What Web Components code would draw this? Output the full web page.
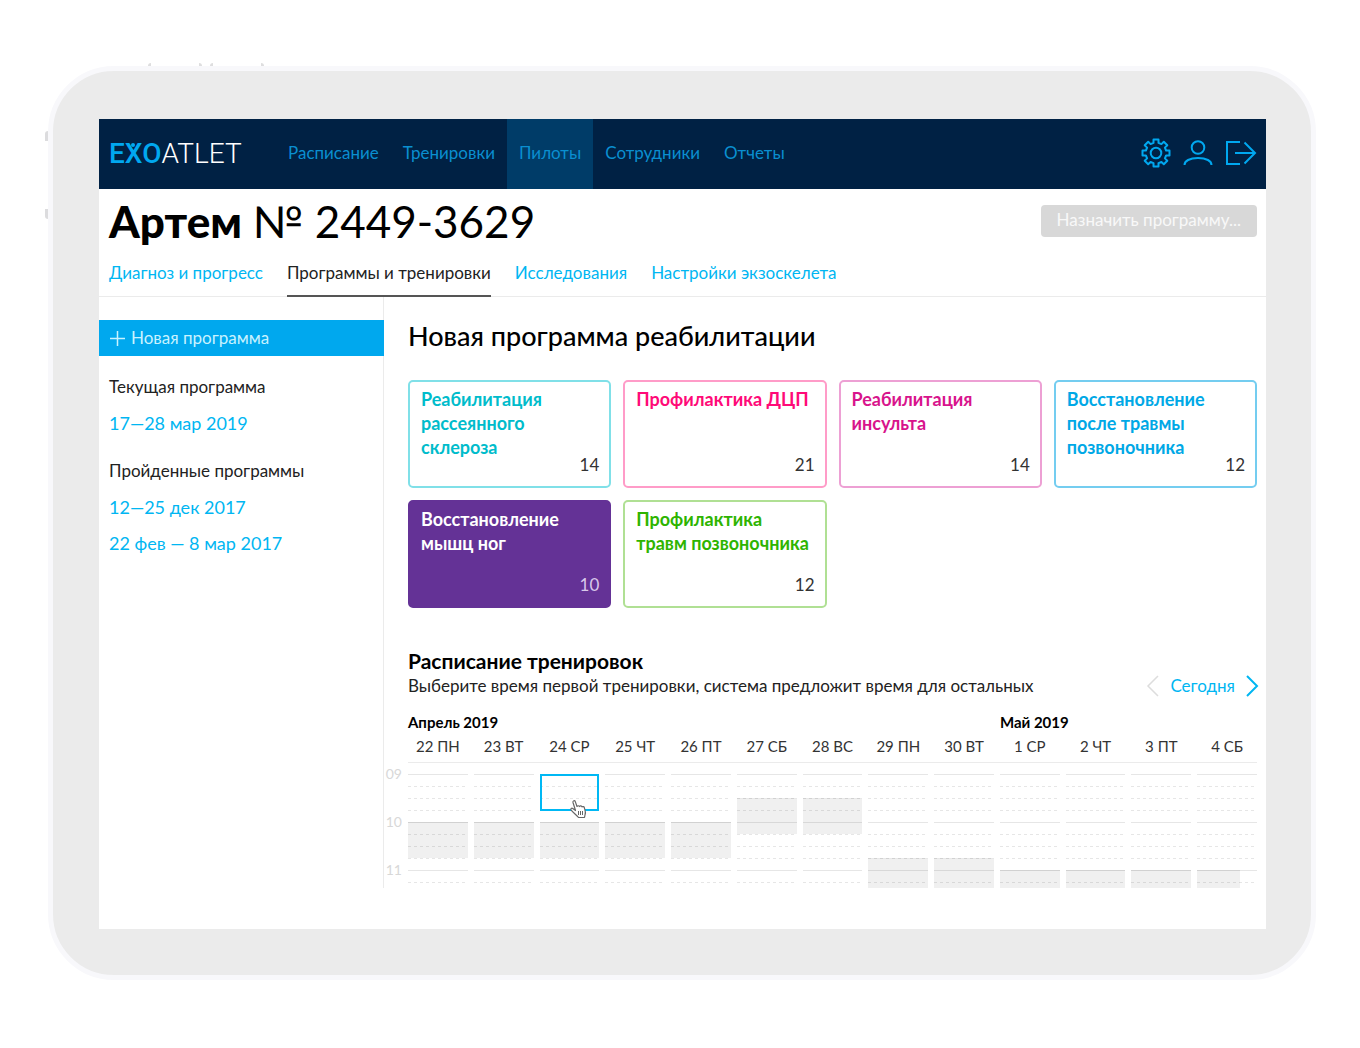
<!DOCTYPE html>
<html lang="ru">
<head>
<meta charset="utf-8">
<title>ExoAtlet</title>
<style>
  body {
    margin: 0;
    background: #fff;
    color: #111;
    font: 17px/24px Lato, "Noto Sans", sans-serif;
    --accent: #00b6f2;
    --line: #ebebeb;
  }
</style>
</head>
<body>
<tablet-frame>
  <app-header>
    <nav-item>Расписание</nav-item>
    <nav-item>Тренировки</nav-item>
    <nav-item active>Пилоты</nav-item>
    <nav-item>Сотрудники</nav-item>
    <nav-item>Отчеты</nav-item>
  </app-header>
  <pilot-title name="Артем" number="№ 2449-3629"></pilot-title>
  <tab-bar>
    <tab-link>Диагноз и прогресс</tab-link>
    <tab-link active>Программы и тренировки</tab-link>
    <tab-link>Исследования</tab-link>
    <tab-link>Настройки экзоскелета</tab-link>
  </tab-bar>
  <pilot-layout>
    <program-sidebar slot="side"></program-sidebar>
    <program-grid heading="Новая программа реабилитации">
      <program-card count="14" style="--tone:#00bccb;--edge:#80e0e8">Реабилитация рассеянного склероза</program-card>
      <program-card count="21" style="--tone:#ff0a78;--edge:#ff9cc8">Профилактика ДЦП</program-card>
      <program-card count="14" style="--tone:#d8148c;--edge:#eda0d4">Реабилитация инсульта</program-card>
      <program-card count="12" style="--tone:#00a8e6;--edge:#74cdf0">Восстановление после травмы позвоночника</program-card>
      <program-card count="10" selected style="--tone:#fff;--edge:#643296">Восстановление мышц ног</program-card>
      <program-card count="12" style="--tone:#2eb400;--edge:#b0e094">Профилактика травм позвоночника</program-card>
    </program-grid>
    <training-schedule></training-schedule>
  </pilot-layout>
</tablet-frame>

<script>
const define = (name, markup) => {
  customElements.define(name, class extends HTMLElement {
    connectedCallback() {
      if (this.shadowRoot) return;
      const root = this.attachShadow({ mode: 'open' });
      root.innerHTML = typeof markup === 'function' ? markup(this) : markup;
    }
  });
};

define('tablet-frame', `
<style>
  :host { display: block; position: relative; margin: 66px 44px 66px 48px; padding: 48px 45px 46px 46px;
    border: 5px solid #f8f8fb; border-radius: 66px; background: #ebebeb; }
  .screen { background: #fff; padding-bottom: 41px; }
  .key { position: absolute; }
  .top { top: -8px; height: 3px; width: 48px; border: solid #dededf; border-width: 0 3px; border-radius: 4px 4px 0 0; }
  .left { left: -8px; width: 3px; height: 10px; background: #dcdcde; }
  .up { border-radius: 3px 0 0 0; }
  .down { border-radius: 0 0 0 3px; }
</style>
<i class="key top" style="left:95px"></i><i class="key top" style="left:157px"></i>
<i class="key left up" style="top:60px"></i><i class="key left down" style="top:138px"></i>
<div class="screen"><slot></slot></div>`);

define('app-header', `
<style>
  :host { display: flex; align-items: stretch; height: 70px; background: #002144; padding: 0 9px 0 10px; }
  .logo { flex: 0 0 167px; display: flex; align-items: center; color: #fff; text-decoration: none;
    font: 300 28px/34px Roboto, sans-serif; }
  .logo b { position: relative; font-weight: 500; color: #00a8f0; }
  .logo i { position: absolute; left: 50%; top: 6px; width: 4px; height: 4px; margin-left: -4px; border-radius: 50%; background: #00a8f0; }
  nav { display: flex; flex: 1; }
  .tools { display: flex; align-items: center; gap: 12px; padding-bottom: 3px; }
  button { border: 0; padding: 0; background: none; display: flex; }
  svg { display: block; fill: none; stroke: #00a8f0; stroke-width: 2; }
</style>
<a class="logo" href="#"><b>EXO<i></i></b><span>ATLET</span></a>
<nav><slot></slot></nav>
<div class="tools">
  <button aria-label="Настройки"><svg width="30" height="30" viewBox="0 0 30 30">
    <path stroke-linejoin="round" d="M12.500 1.500h5v3.400l2.900 1.200 2.400-2.400 3.500 3.500-2.400 2.400 1.200 2.900h3.400v5h-3.400l-1.200 2.900 2.400 2.400-3.500 3.500-2.400-2.400-2.900 1.200v3.400h-5v-3.400l-2.900-1.200-2.400 2.400-3.500-3.500 2.400-2.400-1.200-2.900H1.500v-5h3.400l1.200-2.900-2.400-2.400 3.500-3.500 2.400 2.400 2.900-1.200z"/><circle cx="15" cy="15" r="5.300"/></svg></button>
  <button aria-label="Профиль"><svg width="30" height="30" viewBox="0 0 30 30">
    <circle cx="15" cy="9.500" r="6.300"/><path d="M1.500 27c0-4 5-7 13.500-7s13.500 3 13.500 7"/></svg></button>
  <button aria-label="Выход"><svg width="32" height="30" viewBox="0 0 32 30">
    <path d="M15 4H2v22h13M10 15h20M19.500 4.500 30 15 19.500 25.500"/></svg></button>
</div>`);

define('nav-item', `
<style>
  :host { display: flex; }
  a { display: flex; align-items: center; padding: 0 12px 2px; color: #0a8fd0; text-decoration: none; white-space: nowrap; font-size: 17px; }
  :host([active]) a { background: #003c68; }
</style>
<a href="#"><slot></slot></a>`);

define('pilot-title', el => `
<style>
  :host { display: flex; justify-content: space-between; align-items: center; height: 64px; padding: 0 9px 0 10px; }
  h1 { margin: 0; font-size: 44px; line-height: 64px; font-weight: 900; white-space: nowrap; color: #000; }
  h1 span { font-weight: 400; }
  button { height: 32px; margin: 0; padding: 0 16px 2px; border: 0; border-radius: 4px; background: #d8d8d8; color: #f8f8f8;
    font: inherit; white-space: nowrap; }
</style>
<h1>${el.getAttribute('name')} <span>${el.getAttribute('number')}</span></h1>
<button disabled>Назначить программу...</button>`);

define('tab-bar', `
<style>
  :host { display: flex; gap: 24px; height: 43px; padding: 0 10px; border-bottom: 1px solid var(--line); }
</style><slot></slot>`);

define('tab-link', `
<style>
  :host { display: block; height: 44px; }
  a { display: block; box-sizing: border-box; height: 44px; padding-top: 8px; color: var(--accent);
    text-decoration: none; white-space: nowrap; font-size: 17px; }
  :host([active]) a { color: #222; border-bottom: 2px solid #555; }
</style>
<a href="#"><slot></slot></a>`);

define('pilot-layout', `
<style>
  :host { display: flex; align-items: stretch; }
  aside { flex: 0 0 284px; padding-top: 23px; border-right: 1px solid var(--line); }
  main { flex: 1; min-width: 0; padding: 23px 9px 0 24px; }
</style>
<aside><slot name="side"></slot></aside>
<main><slot></slot></main>`);

define('program-sidebar', `
<style>
  :host { display: block; font-size: 17px; line-height: 36px; }
  button { display: flex; align-items: center; gap: 6px; width: calc(100% + 1px); height: 36px; margin: 0 0 13px; padding: 0 11px;
    border: 0; background: #00a8ee; color: #c8f2ff; font: inherit; }
  svg { stroke: #c8f2ff; stroke-width: 1.5; }
  h4 { margin: 0; padding: 0 10px; font: inherit; color: #222; }
  ul { list-style: none; margin: 0 0 12px; padding: 0 10px; font-size: 18px; }
  a { color: var(--accent); text-decoration: none; }
</style>
<button><svg width="15" height="15" viewBox="0 0 15 15"><path d="M7.500 0v15M0 7.500h15"/></svg>Новая программа</button>
<h4>Текущая программа</h4>
<ul><li><a href="#">17—28 мар 2019</a></li></ul>
<h4>Пройденные программы</h4>
<ul><li><a href="#">12—25 дек 2017</a></li><li><a href="#">22 фев — 8 мар 2017</a></li></ul>`);

define('program-grid', el => `
<style>
  :host { display: block; margin-bottom: 40px; }
  h2 { margin: 0 0 29px; font-size: 27px; line-height: 31px; font-weight: 500; color: #000; }
  div { display: grid; grid-template-columns: repeat(4, 1fr); gap: 12px; }
</style>
<h2>${el.getAttribute('heading')}</h2><div><slot></slot></div>`);

define('program-card', el => `
<style>
  :host { display: block; min-width: 0; }
  button { display: flex; flex-direction: column; justify-content: space-between; width: 100%; height: 108px; margin: 0;
    padding: 5px 10px 9px 11px; border: 2px solid var(--edge); border-radius: 5px; background: #fff; color: var(--tone);
    font: inherit; font-size: 18px; line-height: 24px; font-weight: 700; text-align: left; }
  .count { align-self: flex-end; margin-top: -6px; font-size: 17px; line-height: 24px; font-weight: 400; color: #333; }
  :host([selected]) button { background: #643296; }
  :host([selected]) .count { color: #d8c8ea; }
</style>
<button><span><slot></slot></span><span class="count">${el.getAttribute('count')}</span></button>`);

define('training-schedule', `
<style>
  :host { display: block; }
  h3 { margin: 0; font-size: 21px; line-height: 25px; font-weight: 700; color: #000; }
  .bar { display: flex; justify-content: space-between; align-items: center; height: 26px; margin-bottom: 11px; color: #222; }
  p { margin: 0; font-size: 17px; white-space: nowrap; }
  .pager { display: flex; align-items: center; gap: 11px; margin-right: -2px; }
  .pager button { border: 0; margin: 0; padding: 0; background: none; color: var(--accent); font: inherit; }
  svg { display: block; fill: none; stroke: currentColor; stroke-width: 2; }
  .pager .off { color: #ddd; }
  .cols { display: grid; grid-template-columns: repeat(13, minmax(0, 1fr)); column-gap: 6px; }
  .months { font-size: 15px; line-height: 24px; font-weight: 700; white-space: nowrap; color: #000; }
  .months :first-child { grid-column: span 9; }
  .months :last-child { grid-column: span 4; }
  .days { padding-bottom: 4px; border-bottom: 1px solid var(--line); font-size: 15px; line-height: 24px; text-align: center;
    white-space: nowrap; color: #333; }
  .body { display: flex; gap: 6px; height: 114px; margin: 11px 0 0 -24px; }
  .hours { flex: 0 0 18px; height: 126px; margin-top: -12px; overflow: hidden; font-size: 14px; line-height: 24px; text-align: right; color: #d8d8d8; }
  .hours div { height: 48px; }
  .body .cols { flex: 1; overflow: hidden; }
</style>
<h3>Расписание тренировок</h3>
<div class="bar">
  <p>Выберите время первой тренировки, система предложит время для остальных</p>
  <div class="pager">
    <button class="off" disabled aria-label="Назад"><svg width="13" height="22" viewBox="0 0 13 22"><path d="M12 1 2 11l10 10" stroke-width="1.5"/></svg></button>
    <button>Сегодня</button>
    <button aria-label="Вперед"><svg width="13" height="22" viewBox="0 0 13 22"><path d="M1 1l10 10L1 21"/></svg></button>
  </div>
</div>
<div class="cols months"><div>Апрель 2019</div><div>Май 2019</div></div>
<div class="cols days"><div>22 ПН</div><div>23 ВТ</div><div>24 СР</div><div>25 ЧТ</div><div>26 ПТ</div><div>27 СБ</div><div>28 ВС</div><div>29 ПН</div><div>30 ВТ</div><div>1 СР</div><div>2 ЧТ</div><div>3 ПТ</div><div>4 СБ</div></div>
<div class="body">
  <div class="hours"><div>09</div><div>10</div><div>11</div></div>
  <div class="cols">
    <day-column busy="5"></day-column><day-column busy="5"></day-column><day-column busy="5" pick="1"></day-column>
    <day-column busy="5"></day-column><day-column busy="5"></day-column>
    <day-column busy="3"></day-column><day-column busy="3"></day-column>
    <day-column busy="8"></day-column><day-column busy="8"></day-column>
    <day-column busy="9"></day-column><day-column busy="9"></day-column><day-column busy="9"></day-column>
    <day-column busy="9" short></day-column>
  </div>
</div>`);

define('day-column', el => `
<style>
  :host { display: grid; height: 114px; overflow: hidden; grid-template-rows: repeat(12, 12px);
    background:
      linear-gradient(#e6e6e6 1px, transparent 1px) 0 0 / 100% 48px,
      linear-gradient(transparent 1px, #fff 1px) 0 0 / 100% 12px,
      repeating-linear-gradient(90deg, #e6e6e6 0 3px, #fff 3px 6px); }
  .busy { grid-area: ${el.getAttribute('busy')} / 1 / span 3 / 2; border-top: 1px solid rgba(0,0,0,.03); background: rgba(0,0,0,.06); }
  :host([short]) .busy { margin-right: 17px; }
  button { grid-area: ${el.getAttribute('pick') || 1} / 1 / span 3 / 2; position: relative; height: 37px; margin: 0; padding: 0;
    border: 2px solid #00b8f4; background: none; }
  svg { position: absolute; left: 27px; top: 23px; }
</style>
<div class="busy"></div>
${el.hasAttribute('pick') ? `<button aria-label="Выбрать время"><svg width="20" height="20" viewBox="0 0 20 20" fill="#fff" stroke="#666" stroke-width="1.2" stroke-linejoin="round">
<path d="M6.500 11.500 4 3.500C3.500 1.500 5.800 1 6.300 2.600L8 7.500c.6-1 2-1 2.500 0 .7-.9 2.100-.7 2.500.4.9-.7 2.200-.3 2.400.9.500 2.300 1.800 4.500.6 7.200l-.5 2.500H9.500C7.500 16 4 13.500 2 10.800c-.7-1.200.7-2 1.800-1.300z"/><path d="M9.500 12v4M11.500 12v4M13.500 12v4" stroke-width="1"/></svg></button>` : ''}`);
</script>
</body>
</html>
